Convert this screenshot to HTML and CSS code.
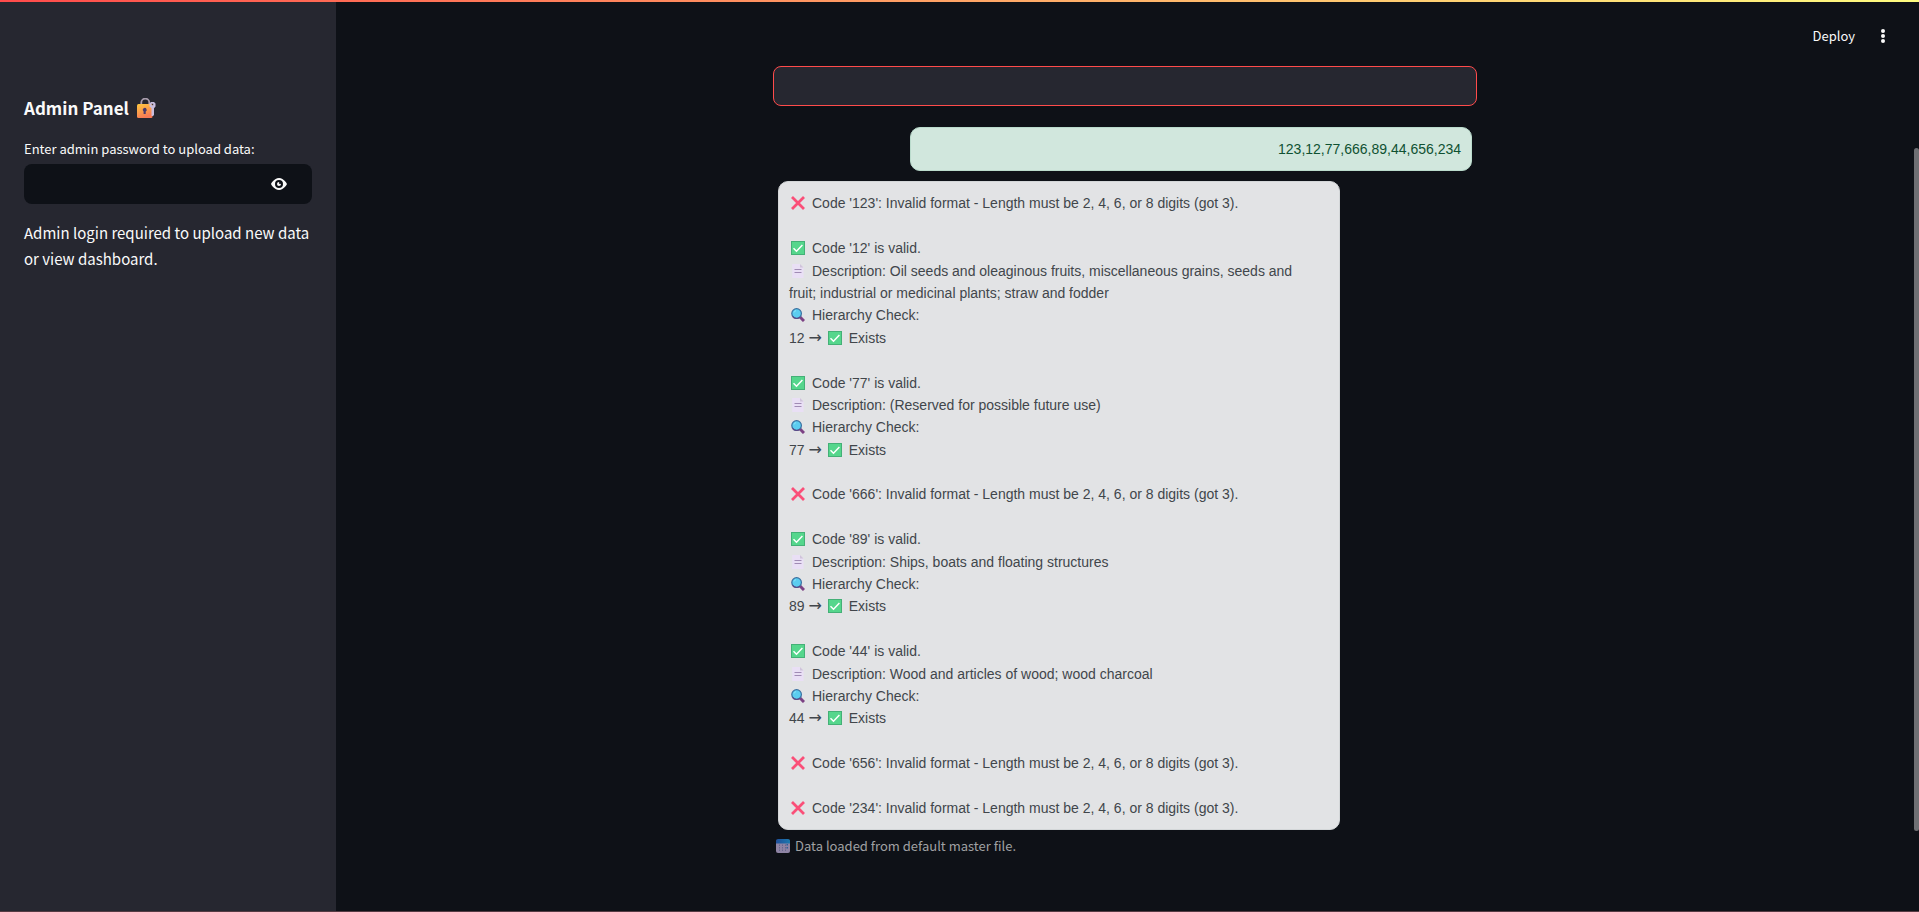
FILE: index.html
```
<!DOCTYPE html>
<html lang="en">
<head>
<meta charset="utf-8">
<title>Code Validator</title>
<link rel="stylesheet" href="styles.css">
</head>
<body>
<svg class="sprite" aria-hidden="true">
  <defs>
    <linearGradient id="lock-body" x1="0" y1="0" x2="0.4" y2="1"><stop offset="0" stop-color="#fdc83f"/><stop offset="1" stop-color="#f97a55"/></linearGradient>
    <linearGradient id="cal-top" x1="0" y1="0" x2="1" y2="0"><stop offset="0" stop-color="#1f4f9b"/><stop offset="1" stop-color="#1c79ad"/></linearGradient>
  </defs>
  <symbol id="cross" viewBox="0 0 14 14"><path d="M1 1 13 13M13 1 1 13" stroke="#fa4f78" stroke-width="2.8" fill="none"/></symbol>
  <symbol id="check" viewBox="0 0 14 14"><path fill="#44b077" d="M0 0h14v14H0z"/><path fill="#55d68c" d="M1 1h12v12H1z"/><path d="M2.5 7.2 5.5 10.2 11.4 4" stroke="#fff" stroke-width="1.5" fill="none"/></symbol>
  <symbol id="page" viewBox="0 0 14 14"><path fill="#e9dff5" d="M1.2 0H9l3.5 3.5V14H1.2z"/><path fill="#cfc4da" d="M9 0l3.5 3.5H9z"/><path d="M3.5 5.5h7M3.5 8.5h7" stroke="#a08bb4"/></symbol>
  <symbol id="lens" viewBox="0 0 14 14"><path d="M9 9l4 4" stroke="#7c4284" stroke-width="3"/><circle cx="5.6" cy="5.5" r="4.8" fill="#5bcdf0" stroke="#3a6f9f" stroke-width="1.2"/><path d="M1.6 8.3a5 5 0 0 0 7.4 1" stroke="#5c4a87" stroke-width="1.2" fill="none"/><path d="M3 4.5A3 3 0 0 1 5 2.6" stroke="#8ee6fa" fill="none"/></symbol>
  <symbol id="calendar" viewBox="0 0 14 14"><rect y="1" width="14" height="13" rx="2" fill="#8e84a4"/><path fill="url(#cal-top)" d="M0 4.5V2a2 2 0 0 1 2-2h10a2 2 0 0 1 2 2v2.5z"/><path d="M3.5 5.5v6.500M6.500 5.500v6.500M9.500 5.500v6.500" stroke="#68678e" stroke-dasharray="1.5 1"/><path d="M10.500 5h1.500v1.500h-1.500zM10.500 8H12v1.500h-1.500z" fill="#315e98"/></symbol>
  <symbol id="lock" viewBox="0 0 19 20"><path d="M4.300 8V4.600a4 4 0 0 1 8 0V8" fill="none" stroke="#a89cac" stroke-width="1.8"/><rect y="6" width="15.5" height="14" rx="1.5" fill="url(#lock-body)"/><path d="M5.700 12a2 2 0 1 1 3 1.600V16H6.600v-2.400z" fill="#4a3a6b"/><path fill="#c9bddd" fill-rule="evenodd" d="M12.500 5.500 14 4h3l1.500 1.500v3L17 10.200V17l-1 1h-1.500v-7.800l-2-1.700zM14.500 5.800v1.400h1.700V5.800z"/></symbol>
  <symbol id="eye" viewBox="0 0 8 8"><path fill="#fafafa" d="M4.030 1C1.500 1 0 4 0 4s1.500 3 4.030 3C6.500 7 8 4 8 4S6.500 1 4.030 1zM4 2a2 2 0 0 1 0 4 2 2 0 0 1 0-4zm0 1a1 1 0 0 0-1 1 1 1 0 0 0 1 1 1 1 0 0 0 1-1c0-.1-.04-.19-.06-.28a.5.5 0 0 1-.44.28.5.5 0 0 1-.5-.5c0-.2.12-.36.28-.44A1 1 0 0 0 4 3z"/></symbol>
</svg>

<div class="app">
  <aside class="sidebar">
    <h2 class="sidebar-title">Admin Panel <svg class="lock"><use href="#lock"/></svg></h2>
    <label class="field-label" for="password">Enter admin password to upload data:</label>
    <div class="password">
      <input class="password-input" id="password" type="password">
      <button class="reveal" type="button" aria-label="Show password"><svg class="eye"><use href="#eye"/></svg></button>
    </div>
    <p class="sidebar-text">Admin login required to upload new data or view dashboard.</p>
  </aside>

  <div class="page">
    <header class="toolbar">
      <button class="deploy" type="button">Deploy</button>
      <button class="menu" type="button" aria-label="Main menu"><svg class="dots" viewBox="0 0 4 14" fill="#fafafa"><circle cx="2" cy="2" r="2"/><circle cx="2" cy="7" r="2"/><circle cx="2" cy="12" r="2"/></svg></button>
    </header>
    <main class="content">
      <input class="query" type="text" aria-label="Message">
      <div class="chat">
        <div class="bubble user">123,12,77,666,89,44,656,234</div>
        <div class="bubble bot">
          <p class="entry"><svg class="icon"><use href="#cross"/></svg>Code '123': Invalid format - Length must be 2, 4, 6, or 8 digits (got 3).</p>
          <p class="entry"><svg class="icon"><use href="#check"/></svg>Code '12' is valid.<br><svg class="icon"><use href="#page"/></svg>Description: Oil seeds and oleaginous fruits, miscellaneous grains, seeds and fruit; industrial or medicinal plants; straw and fodder<br><svg class="icon"><use href="#lens"/></svg>Hierarchy Check:<br>12 <span class="arrow">→</span> <svg class="icon"><use href="#check"/></svg>Exists</p>
          <p class="entry"><svg class="icon"><use href="#check"/></svg>Code '77' is valid.<br><svg class="icon"><use href="#page"/></svg>Description: (Reserved for possible future use)<br><svg class="icon"><use href="#lens"/></svg>Hierarchy Check:<br>77 <span class="arrow">→</span> <svg class="icon"><use href="#check"/></svg>Exists</p>
          <p class="entry"><svg class="icon"><use href="#cross"/></svg>Code '666': Invalid format - Length must be 2, 4, 6, or 8 digits (got 3).</p>
          <p class="entry"><svg class="icon"><use href="#check"/></svg>Code '89' is valid.<br><svg class="icon"><use href="#page"/></svg>Description: Ships, boats and floating structures<br><svg class="icon"><use href="#lens"/></svg>Hierarchy Check:<br>89 <span class="arrow">→</span> <svg class="icon"><use href="#check"/></svg>Exists</p>
          <p class="entry"><svg class="icon"><use href="#check"/></svg>Code '44' is valid.<br><svg class="icon"><use href="#page"/></svg>Description: Wood and articles of wood; wood charcoal<br><svg class="icon"><use href="#lens"/></svg>Hierarchy Check:<br>44 <span class="arrow">→</span> <svg class="icon"><use href="#check"/></svg>Exists</p>
          <p class="entry"><svg class="icon"><use href="#cross"/></svg>Code '656': Invalid format - Length must be 2, 4, 6, or 8 digits (got 3).</p>
          <p class="entry"><svg class="icon"><use href="#cross"/></svg>Code '234': Invalid format - Length must be 2, 4, 6, or 8 digits (got 3).</p>
        </div>
      </div>
      <p class="caption"><svg class="icon"><use href="#calendar"/></svg>Data loaded from default master file.</p>
    </main>
  </div>
  <div class="scroll-rail"><div class="scroll-thumb"></div></div>
</div>
</body>
</html>
```
FILE: styles.css
```
* { box-sizing: border-box; }

body {
  margin: 0;
  background: #0e1117;
  color: #fafafa;
  font-family: "Noto Sans CJK SC", "Noto Sans", sans-serif;
  font-size: 15px;
}

h2, p { margin: 0; }

button {
  padding: 0;
  border: 0;
  background: none;
  color: inherit;
  font: inherit;
  cursor: pointer;
}

.sprite { position: absolute; width: 0; height: 0; }

.app {
  display: flex;
  min-height: 100vh;
  border-bottom: 1px solid #553b43;
}

.app::before {
  content: "";
  position: absolute;
  inset: 0 0 auto;
  height: 2px;
  background: linear-gradient(90deg, #ff4b4b, #fffd80);
}

.sidebar {
  flex: 0 0 336px;
  padding: 94px 24px 24px;
  background: #262730;
}

.sidebar-title {
  display: flex;
  align-items: center;
  gap: 8px;
  margin-bottom: 16px;
  font-size: 17px;
  font-weight: 700;
  line-height: 28px;
}

.lock { width: 19px; height: 20px; }

.field-label {
  display: block;
  margin-bottom: 5px;
  font-size: 13px;
  line-height: 21px;
}

.password {
  display: flex;
  height: 40px;
  margin-bottom: 16px;
  border-radius: 8px;
  background: #0e1117;
}

.password-input {
  flex: 1;
  min-width: 0;
  padding: 0 12px;
  border: 0;
  outline: 0;
  background: none;
  color: inherit;
  font: inherit;
}

.reveal {
  display: grid;
  place-items: center;
  width: 66px;
}

.eye { width: 20px; height: 16px; }

.sidebar-text { line-height: 26px; }

.page { flex: 1; min-width: 0; }

.toolbar {
  display: flex;
  align-items: center;
  justify-content: flex-end;
  gap: 14px;
  height: 66px;
  padding: 6px 17px 0 0;
}

.deploy {
  font-size: 13px;
  line-height: 28px;
}

.menu {
  display: grid;
  place-items: center;
  width: 28px;
  height: 28px;
}

.dots { width: 4px; height: 14px; }

.content {
  max-width: 704px;
  margin: 0 auto;
}

.query {
  display: block;
  width: 100%;
  height: 40px;
  padding: 0 12px;
  border: 1px solid #ff4b4b;
  border-radius: 8px;
  outline: 0;
  background: #262730;
  color: inherit;
  font: inherit;
}

.chat {
  display: flex;
  flex-direction: column;
  gap: 10px;
  padding: 21px 5px 5px;
}

.bubble {
  width: 81%;
  padding: 10px;
  border: 1px solid;
  border-radius: 10px;
  font-family: "Liberation Sans", Arial, sans-serif;
  font-size: 14px;
  line-height: 1.6;
}

.user {
  align-self: flex-end;
  border-color: #badbcc;
  background: #d1e7dd;
  color: #0f5132;
  text-align: right;
}

.bot {
  display: flex;
  flex-direction: column;
  gap: 1.6em;
  padding-right: 24px;
  border-color: #d3d6d8;
  background: #e2e3e5;
  color: #41464b;
}

.icon {
  width: 14px;
  height: 14px;
  margin: 0 7px 0 2px;
  vertical-align: -2px;
}

.arrow {
  font-family: "DejaVu Sans", sans-serif;
  font-size: 16px;
  line-height: 1;
}

.caption {
  color: #a0a1a3;
  font-size: 13px;
  line-height: 21px;
}

.caption .icon {
  margin-right: 5px;
  margin-left: 3px;
}

.scroll-rail {
  display: flex;
  flex: 0 0 5px;
  flex-direction: column;
  justify-content: center;
  padding-top: 68px;
}

.scroll-thumb {
  height: 81%;
  border-radius: 3px;
  background: #6f7074;
}
```
